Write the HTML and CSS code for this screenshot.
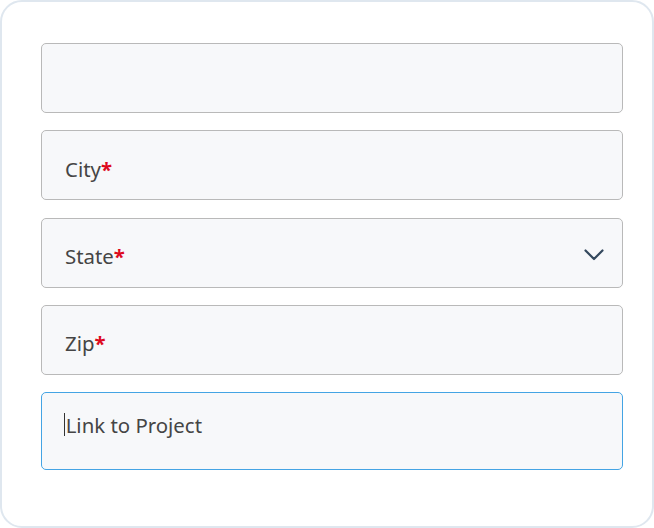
FILE: index.html
```html
<!DOCTYPE html>
<html>
<head>
<meta charset="utf-8">
<link rel="stylesheet" href="styles.css">
</head>
<body>
<div class="card">
  <div class="field"></div>
  <div class="field"><span class="label">City</span><span class="req">*</span></div>
  <div class="field select"><span class="label">State</span><span class="req">*</span>
    <svg class="chev" width="20" height="12" viewBox="0 0 20 12"><path d="M1.5 1.5 L10 10 L18.5 1.5" fill="none" stroke="#34495e" stroke-width="2.2" stroke-linecap="round" stroke-linejoin="round"/></svg>
  </div>
  <div class="field"><span class="label">Zip</span><span class="req">*</span></div>
  <div class="field focus"><span class="caret"></span><span class="label">Link to Project</span></div>
</div>
</body>
</html>
```
FILE: styles.css
```css
html, body {
  margin: 0;
  padding: 0;
  background: #ffffff;
}
body {
  font-family: "Noto Sans", "Open Sans", sans-serif;
}
.card {
  box-sizing: border-box;
  width: 654px;
  height: 528px;
  border: 2px solid #dfe7ef;
  border-radius: 22px;
  background: #ffffff;
  padding: 41px 0 0 39px;
  display: flex;
  flex-direction: column;
  gap: 17.25px;
}
.field {
  box-sizing: border-box;
  width: 582px;
  height: 70px;
  border: 1px solid #b9b9b9;
  border-radius: 5px;
  background: #f7f8fa;
  padding: 25.3px 0 0 23px;
  font-size: 20.4px;
  line-height: 24px;
  color: #454545;
  display: flex;
  align-items: flex-start;
}
.req {
  color: #dd0a1e;
  font-weight: 700;
}
.select {
  position: relative;
}
.chev {
  margin-left: auto;
  margin-right: 18px;
  margin-top: 5.7px;
}
.focus {
  height: 78px;
  border: 1.6px solid #44a4e4;
  padding: 19.8px 0 0 22px;
}
.caret {
  display: inline-block;
  width: 1.2px;
  height: 23px;
  background: #333333;
  margin-top: 0.7px;
  margin-right: 0.5px;
}
```
